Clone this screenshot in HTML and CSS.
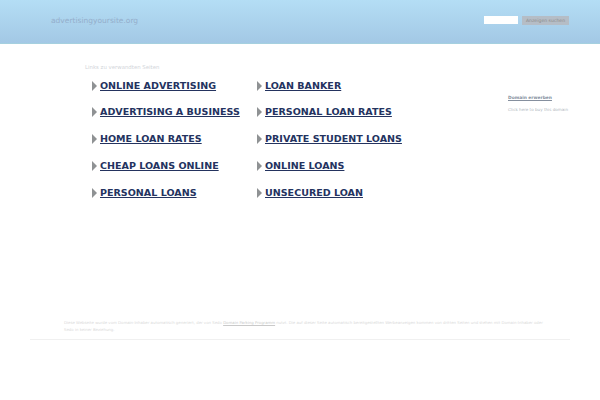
FILE: index.html
```html
<!DOCTYPE html>
<html lang="de">
<head>
    <meta charset="UTF-8">
    <title>advertisingyoursite.org</title>
    <link rel="stylesheet" href="styles.css">
</head>
<body>
    <div class="header">
        <a class="sitename" href="#">advertisingyoursite.org</a>
        <form class="search">
            <input class="searchbox" type="text">
            <button class="searchbtn" type="button">Anzeigen suchen</button>
        </form>
    </div>

    <div class="main">
        <div class="content">
            <div class="linkstitle">Links zu verwandten Seiten</div>
            <ul class="links">
                <li><a href="#">ONLINE ADVERTISING</a></li>
                <li><a href="#">LOAN BANKER</a></li>
                <li><a href="#">ADVERTISING A BUSINESS</a></li>
                <li><a href="#">PERSONAL LOAN RATES</a></li>
                <li><a href="#">HOME LOAN RATES</a></li>
                <li><a href="#">PRIVATE STUDENT LOANS</a></li>
                <li><a href="#">CHEAP LOANS ONLINE</a></li>
                <li><a href="#">ONLINE LOANS</a></li>
                <li><a href="#">PERSONAL LOANS</a></li>
                <li><a href="#">UNSECURED LOAN</a></li>
            </ul>
        </div>
        <div class="side">
            <a class="buy" href="#">Domain erwerben</a>
            <p class="buytext">Click here to buy this domain</p>
        </div>
    </div>

    <div class="footer">
        <p>Diese Webseite wurde vom Domain-Inhaber automatisch generiert, der von Sedo <a href="#">Domain Parking Programm</a> nutzt. Die auf dieser Seite automatisch bereitgestellten Werbeanzeigen kommen von dritten Seiten und stehen mit Domain-Inhaber oder Sedo in keiner Beziehung.</p>
    </div>
</body>
</html>
```

FILE: styles.css
```css
* {
    box-sizing: border-box;
}
body {
    margin: 0;
    background: #fff;
    font-family: "DejaVu Sans", sans-serif;
}
.header {
    display: flex;
    align-items: center;
    justify-content: space-between;
    height: 44px;
    padding: 0 31px 0 51px;
    background: linear-gradient(#b4def5, #a3c8e5);
    border-bottom: 1px solid #a5d0df;
}
.sitename {
    margin-top: -2px;
    color: #94aecb;
    font-size: 7.5px;
    text-decoration: none;
}
.search {
    display: flex;
    align-items: center;
    margin-top: -3px;
}
.searchbox {
    width: 34px;
    height: 8px;
    padding: 0;
    margin: 0 4px 0 0;
    border: 0;
    background: #fff;
}
.searchbtn {
    height: 9px;
    width: 47px;
    padding: 0;
    border: 0;
    background: #b5bdc6;
    color: #8b8b8b;
    font-family: "DejaVu Sans", sans-serif;
    font-size: 4.6px;
    line-height: 9px;
    white-space: nowrap;
}
.main {
    display: flex;
    justify-content: space-between;
    height: 271px;
    padding: 20px 30px 0 85px;
}
.linkstitle {
    color: #d2d5da;
    font-size: 5.4px;
    line-height: 7px;
}
.links {
    display: grid;
    grid-template-columns: 165px 165px;
    grid-auto-rows: 26.75px;
    margin: 7px 0 0;
    padding: 0 0 0 7px;
    list-style: none;
}
.links li {
    display: flex;
    align-items: center;
    gap: 3px;
    height: 14px;
}
.links li::before {
    content: "";
    flex: none;
    width: 0;
    height: 0;
    margin-top: 1px;
    border-left: 5px solid #8f9294;
    border-top: 5px solid transparent;
    border-bottom: 5px solid transparent;
}
.links a {
    color: #24335f;
    font-size: 9.55px;
    font-weight: bold;
    white-space: nowrap;
}
.side {
    width: 62px;
    padding-top: 30px;
}
.buy {
    display: block;
    color: #858f9e;
    font-size: 4.4px;
    font-weight: bold;
    line-height: 7px;
}
.buytext {
    margin: 5px 0 0;
    color: #b0b7c0;
    font-size: 4.1px;
    line-height: 7px;
    white-space: nowrap;
}
.footer {
    margin: 0 30px;
    padding: 4px 22px 6px 34px;
    border-bottom: 1px solid #f0f0f0;
}
.footer p {
    margin: 0;
    color: #dadada;
    font-size: 3.88px;
    line-height: 7px;
}
.footer a {
    color: #cacaca;
}
```
